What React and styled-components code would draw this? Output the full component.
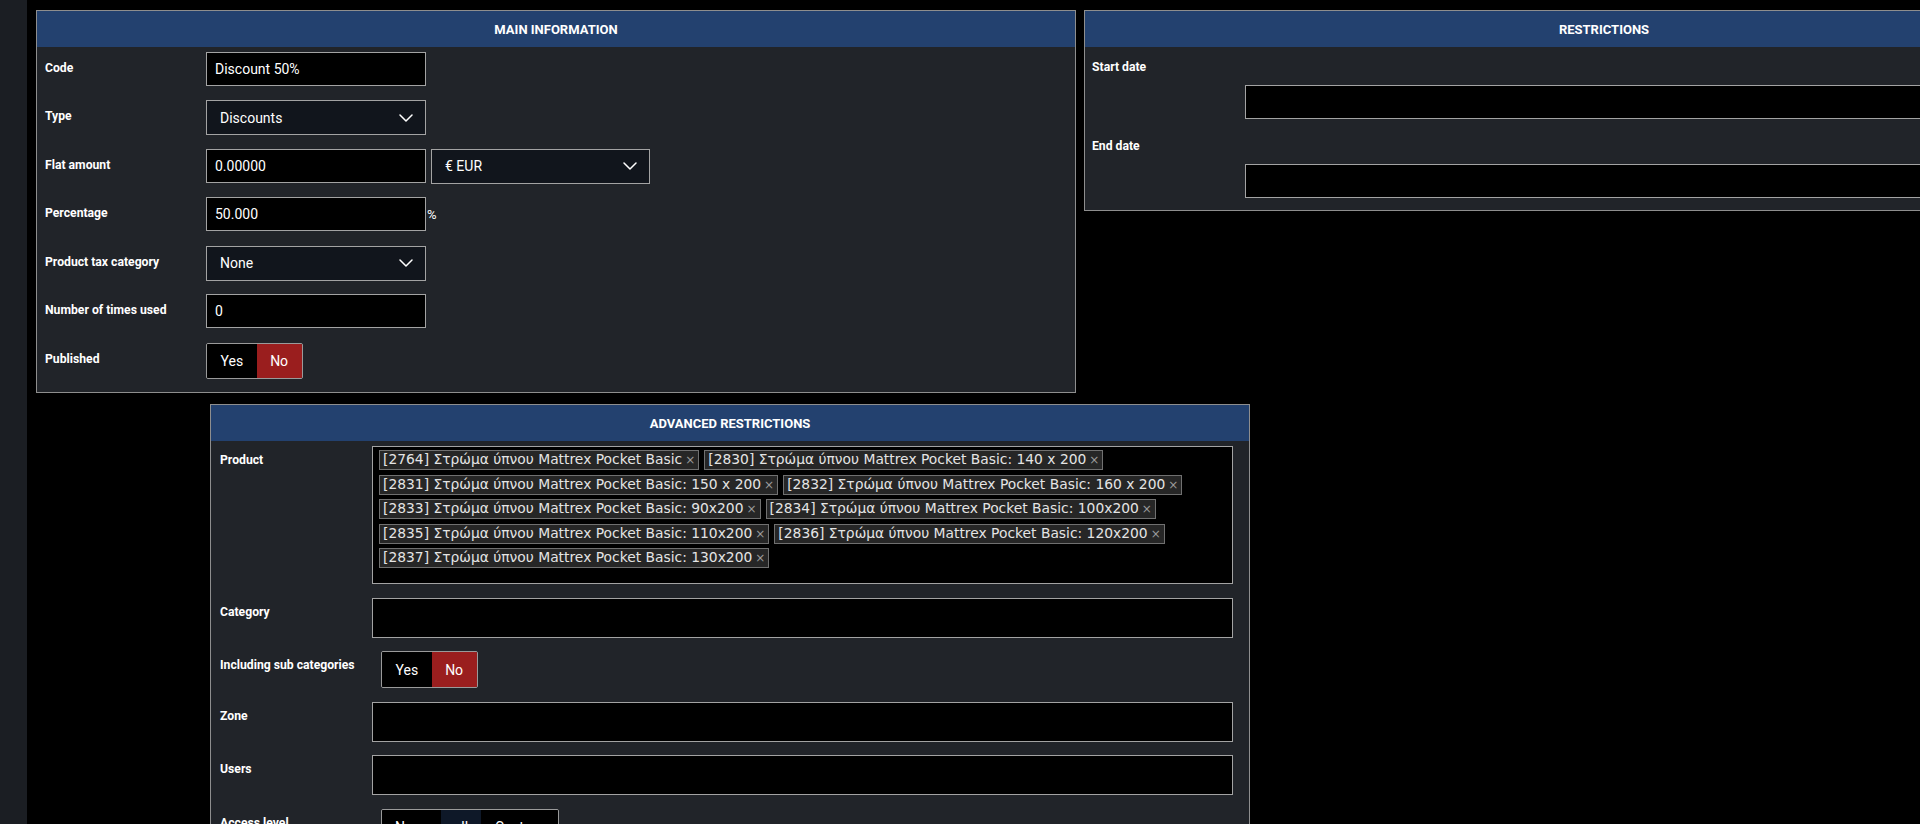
import React from "react";
import styled, { createGlobalStyle, css } from "styled-components";

const GlobalStyle = createGlobalStyle`
  html, body {
    margin: 0;
    padding: 0;
    background: #000;
    overflow: hidden;
  }
  body {
    font-family: Roboto, "Noto Sans", sans-serif;
    color: #fff;
  }
  *, *::before, *::after { box-sizing: border-box; }
`;

const Page = styled.div`
  display: flex;
  width: 100vw;
  height: 100vh;
  background: #000;
  overflow: hidden;
`;

const Sidebar = styled.aside`
  flex: 0 0 27px;
  background: #1b1e23;
`;

const Workspace = styled.main`
  flex: 1;
  min-width: 0;
  padding: 10px 0 0 9px;
  display: flex;
  flex-direction: column;
  align-items: flex-start;
`;

const TopRow = styled.div`
  display: flex;
  gap: 8px;
  align-items: flex-start;
`;

const Panel = styled.section`
  flex: none;
  width: 1040px;
  background: #212429;
  border: 1px solid #8e8e8e;
  ${(p) =>
    p.$offset !== undefined &&
    css`
      margin: 11px 0 0 ${p.$offset}px;
    `}
`;

const PanelHeader = styled.h2`
  margin: 0;
  height: 36px;
  display: flex;
  align-items: center;
  justify-content: center;
  background: #23416f;
  color: #fff;
  font: 700 13px/1 Roboto, sans-serif;
  text-transform: uppercase;
`;

const PanelBody = styled.div`
  padding: ${(p) => p.$pad};
`;

const FormRow = styled.div`
  display: grid;
  grid-template-columns: ${(p) => p.$labelWidth}px 1fr;
  align-items: start;
  ${(p) =>
    p.$height &&
    css`
      height: ${p.$height}px;
    `}
  ${(p) =>
    p.$gap &&
    css`
      margin-bottom: ${p.$gap}px;
    `}
  padding-right: ${(p) => p.$padRight || 0}px;
`;

const Label = styled.label`
  padding: ${(p) => p.$top ?? 9}px 0 0 ${(p) => p.$left}px;
  font: 700 12.2px/14px Roboto, sans-serif;
  color: #fff;
  white-space: nowrap;
`;

const Controls = styled.div`
  display: flex;
  align-items: center;
  gap: 5px;
  ${(p) =>
    p.$inset &&
    css`
      padding-left: ${p.$inset}px;
    `}
`;

const TextInput = styled.input`
  width: ${(p) => (p.$wide ? "100%" : "220px")};
  height: ${(p) => p.$h || 34}px;
  padding: 0 8px;
  background: #000;
  border: 1px solid #a3a3a3;
  border-radius: 0;
  color: #fff;
  font: 400 14px Roboto, sans-serif;
  outline: none;
`;

const Suffix = styled.span`
  margin-left: -4px;
  font: 400 13px Roboto, sans-serif;
  color: #fff;
`;

const SelectBox = styled.div`
  width: ${(p) => p.$w || 220}px;
  height: 35px;
  padding: 0 12px 0 13px;
  display: flex;
  align-items: center;
  justify-content: space-between;
  background: #11151c;
  border: 1px solid #a3a3a3;
  font: 400 14px Roboto, sans-serif;
  color: #fff;
`;

const Chevron = () => (
  <svg width="14" height="8" viewBox="0 0 14 8" fill="none">
    <path d="M1 1l6 6 6-6" stroke="#fff" strokeWidth="1.5" strokeLinecap="round" strokeLinejoin="round" />
  </svg>
);

const Select = ({ value, w }) => (
  <SelectBox $w={w}>
    <span>{value}</span>
    <Chevron />
  </SelectBox>
);

const ToggleGroup = styled.div`
  display: inline-flex;
  height: ${(p) => p.$h || 36}px;
  border: 1px solid #9a9a9a;
  border-radius: 2px;
  overflow: hidden;
`;

const ToggleOption = styled.span`
  display: flex;
  align-items: center;
  padding: 0 ${(p) => p.$px || 13}px;
  font: 400 14px Roboto, sans-serif;
  color: #fff;
  background: ${(p) =>
    p.$tone === "danger" ? "#9a1e1e" : p.$tone === "navy" ? "#0e1828" : "#000"};
`;

const StackField = styled.div`
  display: flex;
  flex-direction: column;
  padding-right: 16px;
  & + & {
    margin-top: 20px;
  }
`;

const StackLabel = styled.label`
  padding-left: 7px;
  font: 700 12.2px/14px Roboto, sans-serif;
  color: #fff;
`;

const StackInput = styled(TextInput)`
  width: auto;
  margin: 11px 0 0 160px;
`;

const TagBox = styled.div`
  height: 138px;
  display: flex;
  flex-wrap: wrap;
  align-content: flex-start;
  gap: 4.5px 5px;
  padding: 3px 6px 4px;
  background: #000;
  border: 1px solid #a3a3a3;
`;

const Tag = styled.span`
  height: 20px;
  display: inline-flex;
  align-items: center;
  gap: 3px;
  padding: 0 3px 0 3px;
  background: #262626;
  border: 1px solid #707070;
  color: #e4e4e4;
  font: 400 13.85px/1 "DejaVu Sans", Verdana, sans-serif;
  white-space: nowrap;
`;

const TagRemove = styled.span`
  color: #9a9a9a;
  font: 400 12px/1 "DejaVu Sans", sans-serif;
`;

const products = [
  "[2764] Στρώμα ύπνου Mattrex Pocket Basic",
  "[2830] Στρώμα ύπνου Mattrex Pocket Basic: 140 x 200",
  "[2831] Στρώμα ύπνου Mattrex Pocket Basic: 150 x 200",
  "[2832] Στρώμα ύπνου Mattrex Pocket Basic: 160 x 200",
  "[2833] Στρώμα ύπνου Mattrex Pocket Basic: 90x200",
  "[2834] Στρώμα ύπνου Mattrex Pocket Basic: 100x200",
  "[2835] Στρώμα ύπνου Mattrex Pocket Basic: 110x200",
  "[2836] Στρώμα ύπνου Mattrex Pocket Basic: 120x200",
  "[2837] Στρώμα ύπνου Mattrex Pocket Basic: 130x200",
];

const MainRow = ({ label, children }) => (
  <FormRow $labelWidth={169} $height={48.5}>
    <Label $left={8}>{label}</Label>
    <Controls>{children}</Controls>
  </FormRow>
);

const AdvRow = ({ label, children, inset, gap = 13.4 }) => (
  <FormRow $labelWidth={161} $gap={gap} $padRight={16}>
    <Label $left={9} $top={7}>{label}</Label>
    <Controls $inset={inset}>{children}</Controls>
  </FormRow>
);

export default function App() {
  return (
    <>
      <GlobalStyle />
      <Page>
        <Sidebar />
        <Workspace>
          <TopRow>
            <Panel>
              <PanelHeader>Main information</PanelHeader>
              <PanelBody $pad="4.5px 0 1px">
                <MainRow label="Code">
                  <TextInput readOnly value="Discount 50%" />
                </MainRow>
                <MainRow label="Type">
                  <Select value="Discounts" />
                </MainRow>
                <MainRow label="Flat amount">
                  <TextInput readOnly value="0.00000" />
                  <Select value="€ EUR" w={219} />
                </MainRow>
                <MainRow label="Percentage">
                  <TextInput readOnly value="50.000" />
                  <Suffix>%</Suffix>
                </MainRow>
                <MainRow label="Product tax category">
                  <Select value="None" />
                </MainRow>
                <MainRow label="Number of times used">
                  <TextInput readOnly value="0" />
                </MainRow>
                <MainRow label="Published">
                  <ToggleGroup>
                    <ToggleOption $px={13.5}>Yes</ToggleOption>
                    <ToggleOption $px={13.5} $tone="danger">No</ToggleOption>
                  </ToggleGroup>
                </MainRow>
              </PanelBody>
            </Panel>

            <Panel>
              <PanelHeader>Restrictions</PanelHeader>
              <PanelBody $pad="13px 0 12px">
                <StackField>
                  <StackLabel>Start date</StackLabel>
                  <StackInput readOnly value="" />
                </StackField>
                <StackField>
                  <StackLabel>End date</StackLabel>
                  <StackInput readOnly value="" />
                </StackField>
              </PanelBody>
            </Panel>
          </TopRow>

          <Panel $offset={174}>
            <PanelHeader>Advanced restrictions</PanelHeader>
            <PanelBody $pad="5px 0 20px">
              <FormRow $labelWidth={161} $gap={14} $padRight={16}>
                <Label $left={9} $top={7}>Product</Label>
                <TagBox>
                  {products.map((p) => (
                    <Tag key={p}>
                      {p}
                      <TagRemove>×</TagRemove>
                    </Tag>
                  ))}
                </TagBox>
              </FormRow>
              <AdvRow label="Category">
                <TextInput $wide $h={40} readOnly value="" />
              </AdvRow>
              <AdvRow label="Including sub categories" inset={9}>
                <ToggleGroup $h={37}>
                  <ToggleOption $px={13.5}>Yes</ToggleOption>
                  <ToggleOption $px={13.5} $tone="danger">No</ToggleOption>
                </ToggleGroup>
              </AdvRow>
              <AdvRow label="Zone">
                <TextInput $wide $h={40} readOnly value="" />
              </AdvRow>
              <AdvRow label="Users">
                <TextInput $wide $h={40} readOnly value="" />
              </AdvRow>
              <AdvRow label="Access level" inset={9}>
                <ToggleGroup $h={37}>
                  <ToggleOption $px={13}>None</ToggleOption>
                  <ToggleOption $px={12.5} $tone="navy">all</ToggleOption>
                  <ToggleOption $px={14.5}>Custom</ToggleOption>
                </ToggleGroup>
              </AdvRow>
            </PanelBody>
          </Panel>
        </Workspace>
      </Page>
    </>
  );
}
